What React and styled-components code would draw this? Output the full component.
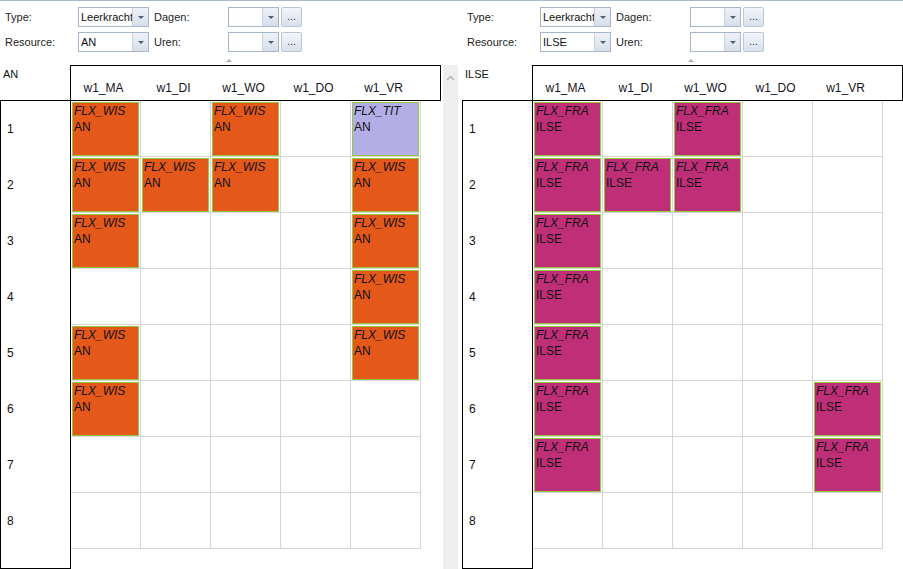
import React from 'react';
import styled, { createGlobalStyle } from 'styled-components';

const GlobalStyle = createGlobalStyle`
  html, body {
    margin: 0;
    padding: 0;
    background: #fff;
  }
  body {
    font-family: "Liberation Sans", Arial, sans-serif;
    font-size: 11px;
    color: #1e1e1e;
  }
`;

const DAYS = ['w1_MA', 'w1_DI', 'w1_WO', 'w1_DO', 'w1_VR'];

const LESSONS = {
  W: { code: 'FLX_WIS', bg: '#e4581a' },
  T: { code: 'FLX_TIT', bg: '#b3aee6' },
  F: { code: 'FLX_FRA', bg: '#bf2f78' },
};

const PANES = [
  {
    resource: 'AN',
    rows: ['W.W.T', 'WWW.W', 'W...W', '....W', 'W...W', 'W....', '.....', '.....'],
  },
  {
    resource: 'ILSE',
    rows: ['F.F..', 'FFF..', 'F....', 'F....', 'F....', 'F...F', 'F...F', '.....'],
  },
];

const Page = styled.div`
  width: 903px;
  height: 569px;
  overflow: hidden;
  border-top: 1px solid #a9b8ce;
  box-sizing: border-box;
`;

const Panels = styled.div`
  display: grid;
  grid-template-columns: 443px 15px 445px;
  grid-template-rows: 64px 1fr;
`;

const Pane = styled.div`
  grid-column: ${p => p.$col};
  grid-row: ${p => p.$row};
  padding-left: ${p => (p.$col === 3 ? 4 : 0)}px;
  display: flex;
  flex-direction: column;
`;

const Splitter = styled.div`
  grid-column: 2;
  grid-row: 2;
  background: #efefef;
  height: 504px;
  padding: 6px 0 0 3px;
  box-sizing: border-box;
`;

const Toolbar = styled.div`
  display: flex;
  flex-direction: column;
  gap: 5px;
  padding: 6px 0 0 5px;
`;

const FieldRow = styled.div`
  display: flex;
  align-items: center;
  height: 20px;
`;

const Label = styled.span`
  width: ${p => p.$w}px;
  margin-left: ${p => p.$ml || 0}px;
  color: #1e1e1e;
`;

const Combo = styled.div`
  width: ${p => p.$w}px;
  height: 20px;
  box-sizing: border-box;
  border: 1px solid #a7b6cc;
  display: flex;
  background: #fff;
`;

const ComboText = styled.span`
  flex: 1;
  padding-left: 2px;
  line-height: 18px;
  color: #111;
  overflow: hidden;
  white-space: nowrap;
`;

const DropButton = styled.span`
  width: 15px;
  border-left: 1px solid #c8d2df;
  background: linear-gradient(#eef2f7, #d6dfea);
  display: flex;
  align-items: center;
  justify-content: center;

  &::after {
    content: '';
    border-left: 3px solid transparent;
    border-right: 3px solid transparent;
    border-top: 3px solid #4e5f7a;
  }
`;

const EllipsisButton = styled.span`
  width: 21px;
  height: 20px;
  margin-left: 2px;
  box-sizing: border-box;
  border: 1px solid #bac7d8;
  border-radius: 2px;
  background: linear-gradient(#f3f6fa, #d9e1ec);
  color: #2d3a4e;
  text-align: center;
  line-height: 16px;
  font-size: 11px;
`;

const Grip = styled.div`
  margin: 7px 0 0 226px;
  width: 0;
  height: 0;
  border-left: 3px solid transparent;
  border-right: 3px solid transparent;
  border-bottom: 3px solid #a8b2c2;
`;

const Schedule = styled.div`
  display: flex;
  flex-direction: column;
  width: 441px;
`;

const HeaderRow = styled.div`
  display: flex;
`;

const Corner = styled.div`
  width: 70px;
  padding: 2px 0 0 3px;
  box-sizing: border-box;
  line-height: 14px;
  color: #111;
`;

const HeaderBox = styled.div`
  width: 371px;
  height: 36px;
  box-sizing: border-box;
  border: 1px solid #000;
  display: flex;
`;

const DayHead = styled.div`
  width: 70px;
  padding: 15px 5px 0 0;
  box-sizing: border-box;
  text-align: center;
  line-height: 14px;
  font-size: 12px;
  color: #141420;
`;

const BodyRow = styled.div`
  display: flex;
  margin-top: -1px;
`;

const RowHead = styled.div`
  width: 71px;
  height: 469px;
  box-sizing: border-box;
  border: 1px solid #000;
  display: flex;
  flex-direction: column;
`;

const RowLabel = styled.div`
  height: 56px;
  padding-left: 6px;
  display: flex;
  align-items: center;
  font-size: 12px;
  color: #111;
`;

const Cells = styled.div`
  margin-top: 1px;
  display: grid;
  grid-template-columns: repeat(5, 70px);
  grid-auto-rows: 56px;
  align-self: flex-start;
`;

const Cell = styled.div`
  box-sizing: border-box;
  border-right: 1px solid #d5d5d5;
  border-bottom: 1px solid #d5d5d5;
`;

const Lesson = styled.div`
  margin: 1px 1px 0 1px;
  height: 54px;
  box-sizing: border-box;
  border: 1px solid #93c83c;
  background: ${p => p.$bg};
  padding: 0 1px;
  line-height: 16px;
  font-size: 12px;
  color: #111;
  white-space: nowrap;
  overflow: hidden;
`;

const Code = styled.div`
  font-style: italic;
`;

const Chevron = () => (
  <svg width="9" height="6" viewBox="0 0 9 6">
    <polyline points="1,5 4.5,1.5 8,5" fill="none" stroke="#b4b4b4" strokeWidth="1.5" />
  </svg>
);

const Controls = ({ resource }) => (
  <>
    <Toolbar>
      <FieldRow>
        <Label $w={73}>Type:</Label>
        <Combo $w={71}>
          <ComboText>Leerkracht</ComboText>
          <DropButton />
        </Combo>
        <Label $w={74} $ml={5}>Dagen:</Label>
        <Combo $w={51}>
          <ComboText />
          <DropButton />
        </Combo>
        <EllipsisButton>...</EllipsisButton>
      </FieldRow>
      <FieldRow>
        <Label $w={73}>Resource:</Label>
        <Combo $w={71}>
          <ComboText>{resource}</ComboText>
          <DropButton />
        </Combo>
        <Label $w={74} $ml={5}>Uren:</Label>
        <Combo $w={51}>
          <ComboText />
          <DropButton />
        </Combo>
        <EllipsisButton>...</EllipsisButton>
      </FieldRow>
    </Toolbar>
    <Grip />
  </>
);

const Timetable = ({ resource, rows }) => (
  <Schedule>
    <HeaderRow>
      <Corner>{resource}</Corner>
      <HeaderBox>
        {DAYS.map(d => <DayHead key={d}>{d}</DayHead>)}
      </HeaderBox>
    </HeaderRow>
    <BodyRow>
      <RowHead>
        {rows.map((_, i) => <RowLabel key={i}>{i + 1}</RowLabel>)}
      </RowHead>
      <Cells>
        {rows.map((row, r) =>
          row.split('').map((k, c) => {
            const lesson = LESSONS[k];
            return (
              <Cell key={`${r}-${c}`}>
                {lesson && (
                  <Lesson $bg={lesson.bg}>
                    <Code>{lesson.code}</Code>
                    <div>{resource}</div>
                  </Lesson>
                )}
              </Cell>
            );
          })
        )}
      </Cells>
    </BodyRow>
  </Schedule>
);

export default function App() {
  return (
    <>
      <GlobalStyle />
      <Page>
        <Panels>
          <Pane $col={1} $row={1}>
            <Controls resource={PANES[0].resource} />
          </Pane>
          <Pane $col={3} $row={1}>
            <Controls resource={PANES[1].resource} />
          </Pane>
          <Pane $col={1} $row={2}>
            <Timetable {...PANES[0]} />
          </Pane>
          <Splitter>
            <Chevron />
          </Splitter>
          <Pane $col={3} $row={2}>
            <Timetable {...PANES[1]} />
          </Pane>
        </Panels>
      </Page>
    </>
  );
}
